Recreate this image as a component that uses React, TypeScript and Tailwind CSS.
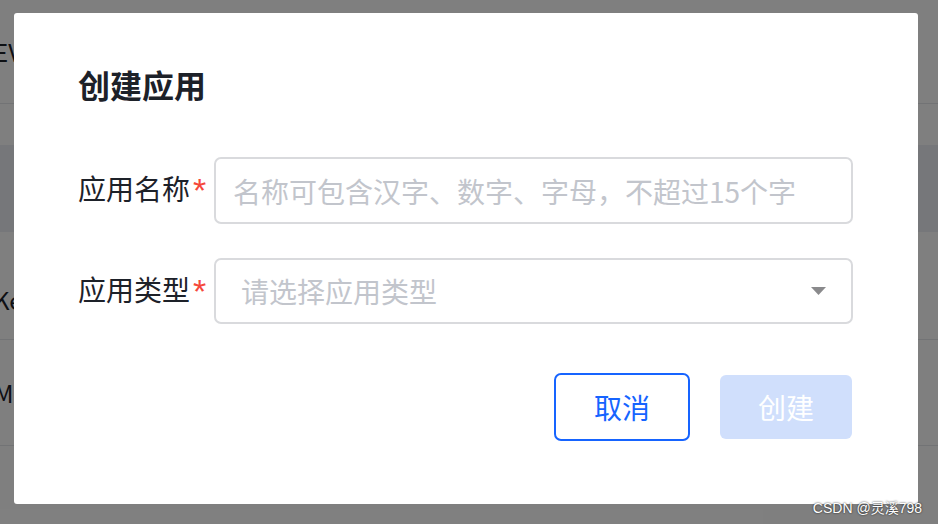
import { useState } from "react";

const font = "font-['Noto_Sans_CJK_SC','Noto_Sans',sans-serif]";

function BackgroundPage() {
  // page behind the dialog, only a sliver of it shows at the left edge
  return (
    <div className={`w-[938px] h-[524px] bg-white text-[#1d2129] ${font}`}>
      <div className="h-[104px] border-b border-[#e5e6eb] flex items-center">
        <span className="ml-[-6px] text-[24px] leading-none">EVENT</span>
      </div>
      <div className="h-[41px]" />
      <div className="h-[87px] bg-[#eceef4]" />
      <div className="h-[108px] border-b border-[#e5e6eb] flex items-center pt-[28px]">
        <span className="ml-[-6px] text-[24px] leading-none">Key</span>
      </div>
      <div className="h-[106px] border-b border-[#e5e6eb] flex items-center">
        <span className="ml-[-6px] text-[24px] leading-none">Mode</span>
      </div>
    </div>
  );
}

function RequiredLabel({ text }: { text: string }) {
  return (
    <div className="w-[136px] shrink-0 flex items-start text-[28px] leading-none text-[#1d2129]">
      <span>{text}</span>
      <span className="ml-[3px] mt-[-1px] text-[34px] leading-none text-[#f5483b] font-['Liberation_Sans',sans-serif]">*</span>
    </div>
  );
}

export default function App() {
  const [name, setName] = useState("");

  return (
    <div className={`relative w-[938px] h-[524px] overflow-hidden ${font}`}>
      <BackgroundPage />
      <div className="absolute inset-0 bg-black/50" />

      <div className="absolute left-[14px] top-[13px] w-[904px] h-[491px] bg-white rounded-[3px] pl-[64px] pr-[65px] pt-[47px]">
        <h2 className="text-[32px] leading-[48px] font-bold text-[#1d2129]">创建应用</h2>

        <div className="mt-[49px] flex items-center">
          <RequiredLabel text="应用名称" />
          <input
            value={name}
            onChange={e => setName(e.target.value)}
            placeholder="名称可包含汉字、数字、字母，不超过15个字"
            className="flex-1 h-[67px] border-2 border-[#d9dadd] rounded-[7px] px-[17px] text-[28px] text-[#1d2129] outline-none placeholder:text-[#c2c5cc]"
          />
        </div>

        <div className="mt-[34px] flex items-center">
          <RequiredLabel text="应用类型" />
          <div className="flex-1 h-[66px] border-2 border-[#d9dadd] rounded-[7px] pl-[25px] pr-[25px] flex items-center justify-between cursor-pointer">
            <span className="text-[28px] text-[#c2c5cc]">请选择应用类型</span>
            <svg width="15" height="8" viewBox="0 0 15 8">
              <path d="M0 0 H15 L7.5 8 Z" fill="#8a8a8c" />
            </svg>
          </div>
        </div>

        <div className="mt-[49px] flex justify-end items-center gap-[30px]">
          <button className="w-[136px] h-[68px] border-2 border-[#1664ff] rounded-[7px] text-[28px] text-[#1664ff] bg-white">
            取消
          </button>
          <button disabled className="w-[132px] h-[64px] mr-[1px] rounded-[6px] text-[28px] text-white bg-[#d0dffc]">
            创建
          </button>
        </div>
      </div>

      <div className="absolute right-[16px] bottom-[9px] text-[14px] leading-none text-white [text-shadow:0_0_2px_rgba(0,0,0,0.9)] font-['Liberation_Sans','Noto_Sans_CJK_SC',sans-serif]">
        CSDN @灵溪798
      </div>
    </div>
  );
}
